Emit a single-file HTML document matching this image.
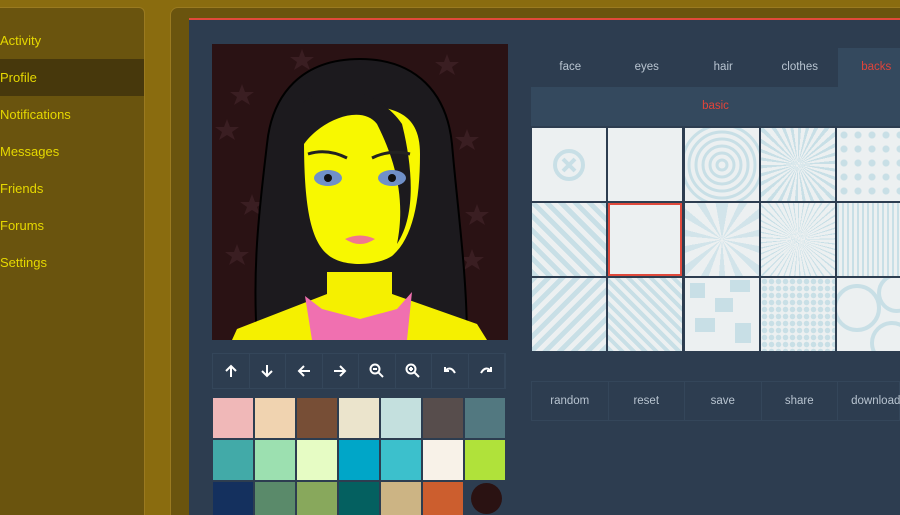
<!DOCTYPE html>
<html><head><style>
*{margin:0;padding:0;box-sizing:border-box}
html,body{width:900px;height:515px;overflow:hidden}
body{background:#8a6c0f;font-family:"Liberation Sans",sans-serif;position:relative}
.side{position:absolute;left:-10px;top:7px;width:155px;height:520px;background:#6a540e;border:1px solid #9a7a20;border-radius:6px}
.side div{height:37px;line-height:37px;color:#e6d800;font-size:13px;padding-left:9px}
.side .act{background:#47380c}
.main{position:absolute;left:170px;top:7px;width:740px;height:520px;background:#6a540e;border:1px solid #9a7a20;border-radius:8px}
.inner{position:absolute;left:189px;top:18px;width:711px;height:497px;background:#2d3d50;border-top:2px solid #e04a3c}
.av{position:absolute;left:212px;top:44px;width:296px;height:296px;background:#2a1214;overflow:hidden}
.ctr{position:absolute;left:212px;top:353px;width:294px;height:36px;display:flex;border:1px solid #34465a}
.ctr div{flex:1;border-right:1px solid #34465a;display:flex;align-items:center;justify-content:center}
.sw{position:absolute;width:40px;height:40px}
.tabs{position:absolute;left:532px;top:48px;width:368px;height:39px;display:flex}
.tabs div{width:76.5px;text-align:center;line-height:38px;color:#b8c4d0;font-size:11.5px;flex:none}
.tabs .on{background:#34495e;color:#e0443a}
.basic{position:absolute;left:531px;top:87px;width:369px;height:39px;background:#34495e;color:#e0443a;font-size:11.5px;text-align:center;line-height:38px}
.t{position:absolute;width:74px;height:73px;background:#ecf0f1;overflow:hidden}
.btns{position:absolute;left:531px;top:381px;width:369px;height:40px;display:flex;border:1px solid #34465a}
.btns div{width:76.5px;flex:none;text-align:center;line-height:38px;color:#b8c4d0;font-size:11.5px;border-right:1px solid #34465a}
</style></head><body>
<div class="side">
<div style="margin-top:14px">Activity</div>
<div class="act">Profile</div>
<div>Notifications</div>
<div>Messages</div>
<div>Friends</div>
<div>Forums</div>
<div>Settings</div>
</div>
<div class="main"></div>
<div class="inner"></div>
<div class="av">
<svg width="296" height="296" viewBox="0 0 296 296">
<g fill="#3a1e22">
<polygon points="30,40 33,48 42,48 35,53 38,61 30,56 22,61 25,53 18,48 27,48"/>
<polygon points="235,10 238,18 247,18 240,23 243,31 235,26 227,31 230,23 223,18 232,18"/>
<polygon points="15,75 18,83 27,83 20,88 23,96 15,91 7,96 10,88 3,83 12,83"/>
<polygon points="255,85 258,93 267,93 260,98 263,106 255,101 247,106 250,98 243,93 252,93"/>
<polygon points="40,150 43,158 52,158 45,163 48,171 40,166 32,171 35,163 28,158 37,158"/>
<polygon points="265,160 268,168 277,168 270,173 273,181 265,176 257,181 260,173 253,168 262,168"/>
<polygon points="25,200 28,208 37,208 30,213 33,221 25,216 17,221 20,213 13,208 22,208"/>
<polygon points="260,205 263,213 272,213 265,218 268,226 260,221 252,226 255,218 248,213 257,213"/>
<polygon points="90,5 93,13 102,13 95,18 98,26 90,21 82,26 85,18 78,13 87,13"/>
</g>
<path d="M148,15 C90,15 60,50 55,100 C48,160 40,220 45,296 L255,296 C255,230 245,160 240,100 C235,50 205,15 148,15Z" fill="#1c1a1e" stroke="#000" stroke-width="2"/>
<path d="M115,228 L115,250 L25,285 L20,296 L275,296 L265,280 L180,250 L180,228Z" fill="#f5f000"/>
<path d="M93,252 L100,296 L195,296 L200,248 L185,265 L148,275 L110,265Z" fill="#f070b0"/>
<path d="M110,255 L148,272 L188,255 L180,250 L148,262 L118,250Z" fill="#f5f000"/>
<path d="M92,95 C92,70 110,62 148,62 C190,62 208,75 208,110 C208,160 200,195 180,212 C165,222 130,224 115,210 C98,195 92,160 92,95Z" fill="#f8f800"/>
<path d="M90,60 C120,30 170,50 190,80 C200,120 205,170 185,200 C195,150 180,110 165,80 C150,60 110,75 92,100Z" fill="#1c1a1e"/>
<path d="M96,110 Q115,104 135,114" stroke="#222" stroke-width="3" fill="none"/>
<path d="M160,114 Q178,105 198,110" stroke="#222" stroke-width="3" fill="none"/>
<ellipse cx="116" cy="134" rx="14" ry="8" fill="#7090c8"/><circle cx="116" cy="134" r="4" fill="#111"/>
<ellipse cx="180" cy="134" rx="14" ry="8" fill="#7090c8"/><circle cx="180" cy="134" r="4" fill="#111"/>
<path d="M133,195 Q148,188 163,195 Q148,205 133,195Z" fill="#f07890"/>
</svg>
</div>
<div class="ctr">
<div><svg width="14" height="14" viewBox="0 0 14 14" stroke="#fff" stroke-width="2" fill="none"><path d="M7,13V2M2,7L7,2L12,7"/></svg></div>
<div><svg width="14" height="14" viewBox="0 0 14 14" stroke="#fff" stroke-width="2" fill="none"><path d="M7,1V12M2,7L7,12L12,7"/></svg></div>
<div><svg width="14" height="14" viewBox="0 0 14 14" stroke="#fff" stroke-width="2" fill="none"><path d="M13,7H2M7,2L2,7L7,12"/></svg></div>
<div><svg width="14" height="14" viewBox="0 0 14 14" stroke="#fff" stroke-width="2" fill="none"><path d="M1,7H12M7,2L12,7L7,12"/></svg></div>
<div><svg width="16" height="16" viewBox="0 0 16 16" stroke="#fff" stroke-width="2" fill="none"><circle cx="6" cy="6" r="4.5"/><path d="M9.5,9.5L14,14M4,6H8"/></svg></div>
<div><svg width="16" height="16" viewBox="0 0 16 16" stroke="#fff" stroke-width="2" fill="none"><circle cx="6" cy="6" r="4.5"/><path d="M9.5,9.5L14,14M4,6H8M6,4V8"/></svg></div>
<div><svg width="14" height="14" viewBox="0 0 14 14" stroke="#fff" stroke-width="2" fill="none"><path d="M3,6Q8,2 12,9M2,3V7H6"/></svg></div>
<div><svg width="14" height="14" viewBox="0 0 14 14" stroke="#fff" stroke-width="2" fill="none"><path d="M11,6Q6,2 2,9M12,3V7H8"/></svg></div>
</div>
<div class="sw" style="left:213px;top:398px;background:#f0b8b8"></div>
<div class="sw" style="left:255px;top:398px;background:#f0d3b0"></div>
<div class="sw" style="left:297px;top:398px;background:#774e36"></div>
<div class="sw" style="left:339px;top:398px;background:#ebe4cc"></div>
<div class="sw" style="left:381px;top:398px;background:#c4e0de"></div>
<div class="sw" style="left:423px;top:398px;background:#574d4c"></div>
<div class="sw" style="left:465px;top:398px;background:#527880"></div>
<div class="sw" style="left:213px;top:440px;background:#42aaa8"></div>
<div class="sw" style="left:255px;top:440px;background:#9ce0b0"></div>
<div class="sw" style="left:297px;top:440px;background:#e6fcc4"></div>
<div class="sw" style="left:339px;top:440px;background:#00a6c8"></div>
<div class="sw" style="left:381px;top:440px;background:#3cc0cc"></div>
<div class="sw" style="left:423px;top:440px;background:#f8f2e8"></div>
<div class="sw" style="left:465px;top:440px;background:#b0e23a"></div>
<div class="sw" style="left:213px;top:482px;background:#14305e"></div>
<div class="sw" style="left:255px;top:482px;background:#5a8a6a"></div>
<div class="sw" style="left:297px;top:482px;background:#88a85c"></div>
<div class="sw" style="left:339px;top:482px;background:#046060"></div>
<div class="sw" style="left:381px;top:482px;background:#ccb484"></div>
<div class="sw" style="left:423px;top:482px;background:#cc5e2e"></div>
<div class="sw" style="left:471px;top:483px;width:31px;height:31px;border-radius:50%;background:#2a1212"></div>
<div class="tabs"><div>face</div><div>eyes</div><div>hair</div><div>clothes</div><div class="on">backs</div></div>
<div class="basic">basic</div>
<div class="t" style="left:532px;top:128px"><svg width="74" height="73"><circle cx="37" cy="37" r="14" fill="none" stroke="#c8dfe6" stroke-width="4"/><path d="M31,31L43,43M43,31L31,43" stroke="#c8dfe6" stroke-width="4"/></svg></div>
<div class="t" style="left:608px;top:128px"></div>
<div class="t" style="left:685px;top:128px"><svg width="74" height="73" fill="none" stroke="#c8dfe6" stroke-width="3"><circle cx="37" cy="37" r="5"/><circle cx="37" cy="37" r="12"/><circle cx="37" cy="37" r="19"/><circle cx="37" cy="37" r="26"/><circle cx="37" cy="37" r="33"/><circle cx="37" cy="37" r="40"/></svg></div>
<div class="t" style="left:761px;top:128px;background:repeating-conic-gradient(from 0deg at 50% 50%,#c8dfe6 0 5deg,#ecf0f1 5deg 12deg)"></div>
<div class="t" style="left:837px;top:128px;background:radial-gradient(circle,#c8dfe6 3px,transparent 4px) 0 0/14px 14px,#ecf0f1"></div>
<div class="t" style="left:532px;top:203px;background:repeating-linear-gradient(45deg,#c8dfe6 0 5px,#ecf0f1 5px 10px)"></div>
<div class="t" style="left:608px;top:203px;border:2px solid #e04a3c"></div>
<div class="t" style="left:685px;top:203px;background:repeating-conic-gradient(from 0deg at 50% 50%,#d2e4ea 0 10deg,#ecf0f1 10deg 25deg)"></div>
<div class="t" style="left:761px;top:203px;background:repeating-conic-gradient(from 0deg at 50% 50%,#c8dfe6 0 2deg,#ecf0f1 2deg 8deg)"></div>
<div class="t" style="left:837px;top:203px;background:repeating-linear-gradient(90deg,#c8dfe6 0 2px,#ecf0f1 2px 5px)"></div>
<div class="t" style="left:532px;top:278px;background:repeating-linear-gradient(-45deg,#c8dfe6 0 5px,#ecf0f1 5px 10px)"></div>
<div class="t" style="left:608px;top:278px;background:repeating-linear-gradient(45deg,#c8dfe6 0 4px,#ecf0f1 4px 8px)"></div>
<div class="t" style="left:685px;top:278px;background:linear-gradient(#c8dfe6,#c8dfe6) 5px 5px/15px 15px no-repeat,linear-gradient(#c8dfe6,#c8dfe6) 30px 20px/18px 14px no-repeat,linear-gradient(#c8dfe6,#c8dfe6) 10px 40px/20px 14px no-repeat,linear-gradient(#c8dfe6,#c8dfe6) 50px 45px/16px 20px no-repeat,linear-gradient(#c8dfe6,#c8dfe6) 45px 2px/20px 12px no-repeat,#ecf0f1"></div>
<div class="t" style="left:761px;top:278px;background:radial-gradient(circle,#c8dfe6 2.5px,transparent 3px) 0 0/7px 7px,#ecf0f1"></div>
<div class="t" style="left:837px;top:278px"><svg width="74" height="73" fill="none" stroke="#c8dfe6" stroke-width="4"><circle cx="20" cy="30" r="22"/><circle cx="60" cy="15" r="18"/><circle cx="55" cy="65" r="20"/></svg></div>
<div class="btns"><div>random</div><div>reset</div><div>save</div><div>share</div><div>download</div></div>
</body></html>
